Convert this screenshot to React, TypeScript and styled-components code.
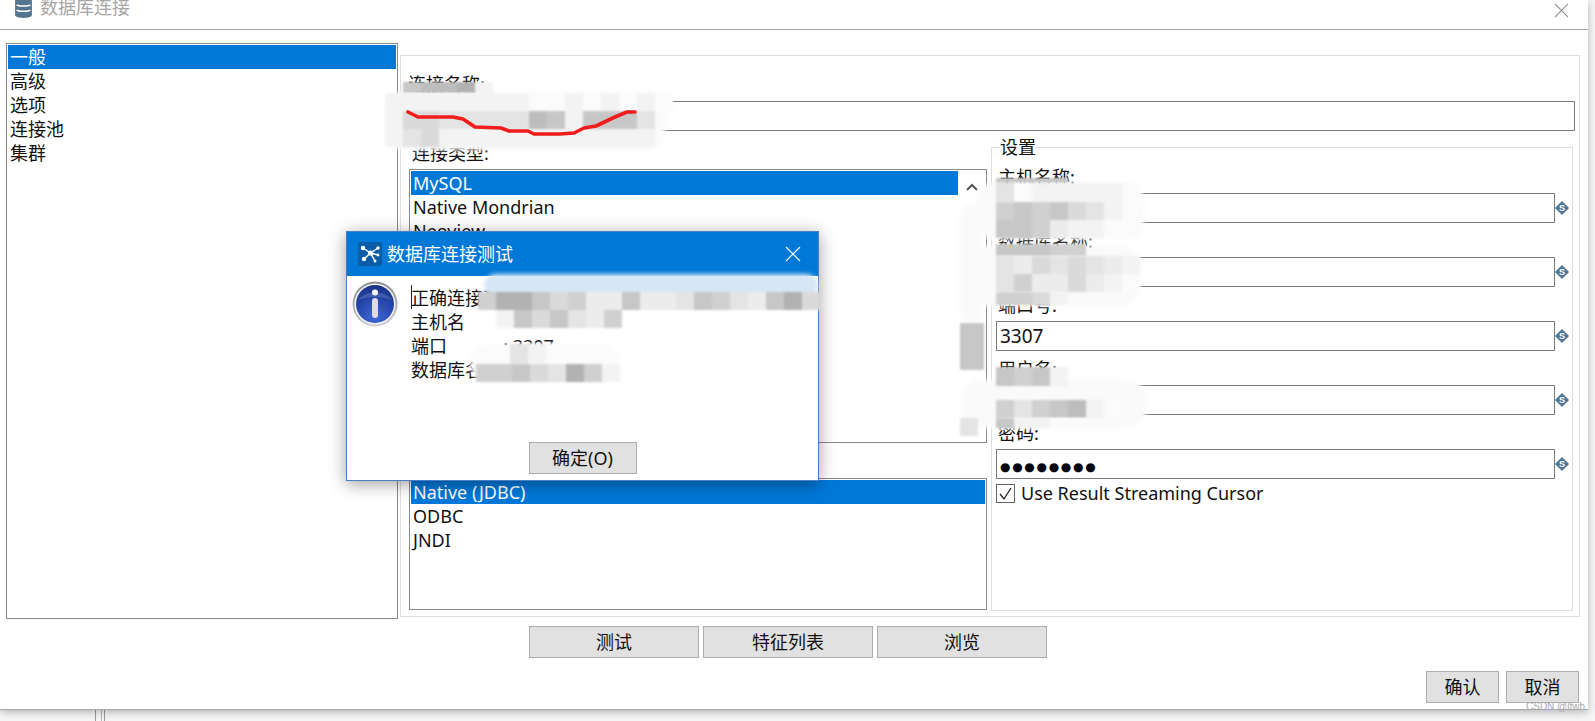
import styled, { createGlobalStyle } from "styled-components";

const GlobalStyle = createGlobalStyle`
  html, body {
    margin: 0;
    padding: 0;
    background: #f5f5f5;
  }
  * {
    box-sizing: border-box;
  }
`;

const FONT = `"Noto Sans", "Noto Sans CJK SC", sans-serif`;

const Page = styled.div`
  position: relative;
  width: 1595px;
  height: 721px;
  overflow: hidden;
  background: #f6f6f6;
  font-family: ${FONT};
  font-size: 18px;
  line-height: 24px;
  color: #111;
`;

const BackLines = styled.div`
  position: absolute;
  left: 95px;
  top: 700px;
  width: 10px;
  height: 21px;
  border-left: 1px solid #9a9a9a;
  border-right: 1px solid #9a9a9a;
  &::after {
    content: "";
    display: block;
    width: 3px;
    height: 100%;
    margin-left: 2px;
    border-right: 1px solid #b5b5b5;
  }
`;

const Window = styled.div`
  position: relative;
  width: 1588px;
  height: 710px;
  background: #fff;
  display: flex;
  flex-direction: column;
  border-bottom: 1px solid #a8a8a8;
  box-shadow: 0 2px 8px rgba(0, 0, 0, 0.28);
`;

const TitleBar = styled.div`
  height: 30px;
  flex: none;
  display: flex;
  align-items: flex-start;
  padding: 0 19px 0 14px;
  border-bottom: 1px solid #a4a4a4;
  color: #a6a6a6;
`;

const TitleText = styled.span`
  margin: -5px 0 0 7px;
  flex: 1;
`;

const CloseSlot = styled.div`
  margin-top: -1px;
`;

const Body = styled.div`
  display: flex;
  align-items: flex-start;
  padding: 13px 0 0 6px;
`;

const Nav = styled.div`
  width: 392px;
  height: 576px;
  flex: none;
  padding: 1px;
  border: 1px solid #8a8a8a;
`;

const Row = styled.div<{ $selected?: boolean }>`
  height: 24px;
  padding-left: 2px;
  white-space: nowrap;
  background: ${(p) => (p.$selected ? "#0078d7" : "transparent")};
  color: ${(p) => (p.$selected ? "#fff" : "#111")};
`;

const Panel = styled.div`
  width: 1180px;
  height: 562px;
  flex: none;
  margin: 12px 0 0 2px;
  padding: 16px 4px 0 7px;
  border: 1px solid #dedede;
`;

const Label = styled.div`
  height: 24px;
`;

const NameField = styled.div`
  height: 30px;
  margin-top: 5px;
  border: 1px solid #7a7a7a;
`;

const Columns = styled.div`
  display: flex;
  gap: 4px;
  margin: 4px 0 0 1px;
`;

const LeftColumn = styled.div`
  width: 578px;
  flex: none;
  padding-top: 6px;
`;

const TypeLabel = styled(Label)`
  margin: 0 0 4px 3px;
`;

const AccessLabel = styled(Label)`
  margin: 7px 0 4px 4px;
`;

const ListBox = styled.div<{ $height: number }>`
  position: relative;
  display: flex;
  height: ${(p) => p.$height}px;
  padding: 1px;
  border: 1px solid #8a8a8a;
  overflow: hidden;
`;

const ListRows = styled.div`
  flex: 1;
`;

const ScrollBar = styled.div`
  width: 27px;
  flex: none;
  display: flex;
  justify-content: center;
  padding-top: 12px;
`;

const Settings = styled.fieldset`
  width: 582px;
  height: 476px;
  margin: 0;
  padding: 6px 0 0 4px;
  border: 1px solid #dedede;
  flex: none;
`;

const Legend = styled.legend`
  margin-left: 4px;
  padding: 0;
  line-height: 24px;
`;

const SettingRow = styled.div`
  margin-bottom: 6px;
`;

const SettingLabel = styled(Label)`
  margin: 0 0 4px 2px;
`;

const FieldLine = styled.div`
  display: flex;
  align-items: center;
`;

const Field = styled.div`
  width: 559px;
  height: 30px;
  flex: none;
  padding: 2px 0 0 3px;
  border: 1px solid #7a7a7a;
  font-size: 19px;
`;

const Dots = styled.span`
  font-family: "DejaVu Sans", sans-serif;
  font-size: 12px;
  letter-spacing: 1.7px;
  color: #050510;
  line-height: 26px;
`;

const CheckLine = styled.div`
  display: flex;
  align-items: center;
  gap: 6px;
  margin-top: -4px;
`;

const CheckBox = styled.div`
  width: 19px;
  height: 19px;
  display: flex;
  align-items: center;
  justify-content: center;
  border: 1px solid #666;
`;

const ButtonRow = styled.div`
  display: flex;
  justify-content: center;
  gap: 4px;
  margin-top: 7px;
  padding-right: 12px;
`;

const Button = styled.button<{ $width: number }>`
  width: ${(p) => p.$width}px;
  height: 32px;
  padding: 0;
  background: #e1e1e1;
  border: 1px solid #adadad;
  font: inherit;
  color: #111;
`;

const Footer = styled.div`
  display: flex;
  justify-content: flex-end;
  gap: 7px;
  margin-top: 13px;
  padding-right: 9px;
`;

const Dialog = styled.div`
  position: absolute;
  left: 346px;
  top: 231px;
  width: 473px;
  height: 250px;
  display: flex;
  flex-direction: column;
  background: #fff;
  border: 1px solid #4a7fc8;
  box-shadow: 0 3px 16px rgba(0, 0, 0, 0.38);
`;

const DialogTitle = styled.div`
  height: 44px;
  flex: none;
  display: flex;
  align-items: center;
  gap: 5px;
  padding: 0 17px 0 11px;
  background: #0078d7;
  color: #fff;
`;

const DialogTitleText = styled.span`
  flex: 1;
`;

const DialogBody = styled.div`
  flex: 1;
  display: flex;
  gap: 13px;
  padding: 5px 0 0 5px;
`;

const MessageLines = styled.div`
  position: relative;
  padding-top: 5px;
  white-space: pre;
`;

const Caret = styled.div`
  position: absolute;
  left: 0;
  top: 4px;
  height: 24px;
  border-left: 1px solid #222;
`;

const DialogFooter = styled.div`
  display: flex;
  justify-content: center;
  padding-bottom: 6px;
`;

const Mosaic = styled.div<{ $x: number; $y: number; $w: number; $h: number; $cols: number }>`
  position: absolute;
  left: ${(p) => p.$x}px;
  top: ${(p) => p.$y}px;
  display: grid;
  grid-template-columns: repeat(${(p) => p.$cols}, ${(p) => p.$w}px);
  grid-auto-rows: ${(p) => p.$h}px;
  filter: blur(1px);
`;

const Tile = styled.div<{ $tone: string }>`
  background: ${(p) => p.$tone};
`;

const Smear = styled.div<{ $x: number; $y: number; $w: number; $h: number; $color?: string }>`
  position: absolute;
  left: ${(p) => p.$x}px;
  top: ${(p) => p.$y}px;
  width: ${(p) => p.$w}px;
  height: ${(p) => p.$h}px;
  border-radius: 18px;
  background: ${(p) => p.$color ?? "#fafafa"};
  filter: blur(2px);
`;

const RedMark = styled.svg`
  position: absolute;
  left: 400px;
  top: 104px;
`;

const Watermark = styled.div`
  position: absolute;
  left: 1526px;
  top: 701px;
  font-family: "Liberation Sans", sans-serif;
  font-size: 10px;
  line-height: 12px;
  color: #a8a8a8;
`;

const TONES: Record<string, string> = {
  ".": "transparent",
  w: "#fbfbfb",
  x: "#f3f3f3",
  k: "#ececec",
  l: "#e4e4e4",
  m: "#dadada",
  n: "#d0d0d0",
  o: "#c7c7c7",
  p: "#bdbdbd",
  q: "#b2b2b2",
};

const MOSAICS = [
  { x: 403, y: 82, w: 18, h: 11, rows: ["oppqx"] },
  {
    x: 385,
    y: 93,
    w: 18,
    h: 18,
    rows: ["xxxxxxxxwwxwxwxw", "xmmlllllpoxoool.", "xlmxxxxxxxxxxxx."],
  },
  {
    x: 478,
    y: 292,
    w: 18,
    h: 18,
    rows: ["nqqomnkkokklonlkoqm", ".xomolkn..........."],
  },
  { x: 510, y: 344, w: 18, h: 20, rows: ["lxw....."] },
  { x: 476, y: 364, w: 18, h: 18, rows: ["nnomlqnx"] },
  { x: 996, y: 178, w: 18, h: 5, rows: ["oooo"] },
  { x: 996, y: 183, w: 18, h: 19, rows: ["lwxxxxxw"] },
  { x: 996, y: 202, w: 18, h: 18, rows: ["nonomlxw", "oonkxxww"] },
  { x: 996, y: 244, w: 18, h: 12, rows: ["ooonn"] },
  { x: 996, y: 256, w: 18, h: 18, rows: ["lkmlmlkx", "lnkkmkxw"] },
  { x: 996, y: 292, w: 18, h: 13, rows: ["nnmx"] },
  { x: 960, y: 323, w: 24, h: 47, rows: ["o"] },
  { x: 996, y: 367, w: 18, h: 19, rows: ["onox"] },
  { x: 996, y: 400, w: 18, h: 18, rows: ["nlnopxw"] },
  { x: 996, y: 418, w: 18, h: 10, rows: ["oxxww"] },
  { x: 960, y: 418, w: 18, h: 18, rows: ["l"] },
];

const SMEARS = [
  { x: 387, y: 92, w: 278, h: 58 },
  { x: 976, y: 183, w: 168, h: 56 },
  { x: 964, y: 246, w: 176, h: 60 },
  { x: 960, y: 205, w: 22, h: 118 },
  { x: 962, y: 380, w: 184, h: 48 },
];

const MosaicBlock = ({ x, y, w, h, rows }: (typeof MOSAICS)[number]) => (
  <Mosaic $x={x} $y={y} $w={w} $h={h} $cols={rows[0].length}>
    {rows.flatMap((row, r) =>
      row.split("").map((c, i) => <Tile key={`${r}-${i}`} $tone={TONES[c]} />)
    )}
  </Mosaic>
);

const DbIcon = () => (
  <svg width="19" height="21" viewBox="0 0 18 20" style={{ marginTop: -3 }}>
    <path
      d="M1 3c0-2 3.5-3 8-3s8 1 8 3v14c0 2-3.5 3-8 3s-8-1-8-3z"
      fill="#55758f"
    />
    <path
      d="M2.5 7.5c2 1.4 11 1.4 13 0M2.5 12.5c2 1.4 11 1.4 13 0"
      fill="none"
      stroke="#fff"
      strokeWidth="1.5"
    />
  </svg>
);

const CloseIcon = ({ color, size }: { color: string; size: number }) => (
  <svg width={size} height={size} viewBox="0 0 16 16">
    <path d="M1 1l14 14M15 1L1 15" stroke={color} strokeWidth="1.1" fill="none" />
  </svg>
);

const NetIcon = () => (
  <svg width="24" height="24" viewBox="0 0 24 24">
    <rect width="24" height="24" rx="2" fill="#0a5ca6" />
    <path
      d="M12.5 11L5 6M12.5 11L20 6M12.5 11L20 13M12.5 11L6 17M12.5 11L17 19"
      stroke="#fff"
      strokeWidth="1.5"
    />
    <circle cx="12.5" cy="11" r="2.6" fill="#fff" />
    <circle cx="5" cy="6" r="2.2" fill="#fff" />
    <circle cx="20" cy="6" r="1.7" fill="#fff" />
    <circle cx="20" cy="13" r="1.4" fill="#fff" />
    <circle cx="6" cy="17" r="2.2" fill="#fff" />
    <circle cx="17" cy="19" r="1.5" fill="#fff" />
  </svg>
);

const InfoIcon = () => (
  <svg width="46" height="46" viewBox="0 0 46 46" style={{ flex: "none" }}>
    <defs>
      <linearGradient id="ring" x1="0" y1="0" x2="0" y2="1">
        <stop offset="0" stopColor="#8c8c94" />
        <stop offset="1" stopColor="#cfcfd4" />
      </linearGradient>
      <radialGradient id="disc" cx="0.5" cy="0.85" r="0.9">
        <stop offset="0" stopColor="#3f68d6" />
        <stop offset="0.55" stopColor="#2546ac" />
        <stop offset="1" stopColor="#1c2f80" />
      </radialGradient>
    </defs>
    <circle cx="23" cy="23" r="22.5" fill="url(#ring)" />
    <circle cx="23" cy="23" r="20.5" fill="#f4f4f6" />
    <circle cx="23" cy="23" r="19" fill="url(#disc)" />
    <path d="M6 19c6-10 28-10 34 0-10-4-24-4-34 0z" fill="#fff" opacity="0.14" />
    <circle cx="23" cy="11.5" r="3" fill="#fff" />
    <rect x="20" y="17" width="6" height="20" rx="3" fill="#dcdce2" />
  </svg>
);

const Chevron = () => (
  <svg width="12" height="8" viewBox="0 0 12 8">
    <path d="M1 7l5-5 5 5" fill="none" stroke="#555" strokeWidth="2" />
  </svg>
);

const VarIcon = () => (
  <svg width="14" height="14" viewBox="0 0 14 14" style={{ flex: "none" }}>
    <path d="M7 0l7 7-7 7-7-7z" fill="#4f7598" />
    <text
      x="7"
      y="10"
      textAnchor="middle"
      fontSize="9"
      fontWeight="700"
      fontFamily="Liberation Sans, sans-serif"
      fill="#fff"
    >
      S
    </text>
  </svg>
);

const settings = [
  { label: "主机名称:", value: "" },
  { label: "数据库名称:", value: "" },
  { label: "端口号:", value: "3307" },
  { label: "用户名:", value: "" },
  { label: "密码:", value: "●●●●●●●●", secret: true },
];

const App = () => {
  return (
    <Page>
      <GlobalStyle />
      <BackLines />
      <Window>
        <TitleBar>
          <DbIcon />
          <TitleText>数据库连接</TitleText>
          <CloseSlot>
            <CloseIcon color="#8a8a8a" size={15} />
          </CloseSlot>
        </TitleBar>
        <Body>
          <Nav>
            <Row $selected>一般</Row>
            <Row>高级</Row>
            <Row>选项</Row>
            <Row>连接池</Row>
            <Row>集群</Row>
          </Nav>
          <Panel>
            <Label>连接名称:</Label>
            <NameField />
            <Columns>
              <LeftColumn>
                <TypeLabel>连接类型:</TypeLabel>
                <ListBox $height={274}>
                  <ListRows>
                    <Row $selected>MySQL</Row>
                    <Row>Native Mondrian</Row>
                    <Row>Neoview</Row>
                  </ListRows>
                  <ScrollBar>
                    <Chevron />
                  </ScrollBar>
                </ListBox>
                <AccessLabel>连接方式:</AccessLabel>
                <ListBox $height={132}>
                  <ListRows>
                    <Row $selected>Native (JDBC)</Row>
                    <Row>ODBC</Row>
                    <Row>JNDI</Row>
                  </ListRows>
                </ListBox>
              </LeftColumn>
              <Settings>
                <Legend>设置</Legend>
                {settings.map((s) => (
                  <SettingRow key={s.label}>
                    <SettingLabel>{s.label}</SettingLabel>
                    <FieldLine>
                      <Field>{s.secret ? <Dots>{s.value}</Dots> : s.value}</Field>
                      <VarIcon />
                    </FieldLine>
                  </SettingRow>
                ))}
                <CheckLine>
                  <CheckBox>
                    <svg width="15" height="15" viewBox="0 0 15 15">
                      <path d="M2 8l4 5 7-11" fill="none" stroke="#222" strokeWidth="1.3" />
                    </svg>
                  </CheckBox>
                  <span>Use Result Streaming Cursor</span>
                </CheckLine>
              </Settings>
            </Columns>
          </Panel>
        </Body>
        <ButtonRow>
          <Button $width={170}>测试</Button>
          <Button $width={170}>特征列表</Button>
          <Button $width={170}>浏览</Button>
        </ButtonRow>
        <Footer>
          <Button $width={73}>确认</Button>
          <Button $width={73}>取消</Button>
        </Footer>
      </Window>

      {SMEARS.map((s) => (
        <Smear key={`${s.x}-${s.y}`} $x={s.x} $y={s.y} $w={s.w} $h={s.h} />
      ))}

      <Dialog>
        <DialogTitle>
          <NetIcon />
          <DialogTitleText>数据库连接测试</DialogTitleText>
          <CloseIcon color="#fff" size={16} />
        </DialogTitle>
        <DialogBody>
          <InfoIcon />
          <MessageLines>
            <Caret />
            <div>正确连接到数据库</div>
            <div>主机名</div>
            <div>{"端口            : 3307"}</div>
            <div>数据库名</div>
          </MessageLines>
        </DialogBody>
        <DialogFooter>
          <Button $width={108}>确定(O)</Button>
        </DialogFooter>
      </Dialog>

      <Smear $x={484} $y={274} $w={334} $h={24} $color="#d6e6f4" />
      <Smear $x={470} $y={344} $w={150} $h={38} $color="#fbfbfb" />
      {MOSAICS.map((m) => (
        <MosaicBlock key={`${m.x}-${m.y}`} {...m} />
      ))}
      <RedMark width="240" height="34" viewBox="400 104 240 34">
        <polyline
          points="408,112 418,117 453,117 463,119 475,127 501,128 509,131 528,131 534,134 560,134 574,133 584,128 596,126 615,117 627,112 635,112"
          fill="none"
          stroke="#f21c1c"
          strokeWidth="3.6"
          strokeLinejoin="round"
          strokeLinecap="round"
        />
      </RedMark>
      <Watermark>CSDN @lfwh</Watermark>
    </Page>
  );
};

export default App;
